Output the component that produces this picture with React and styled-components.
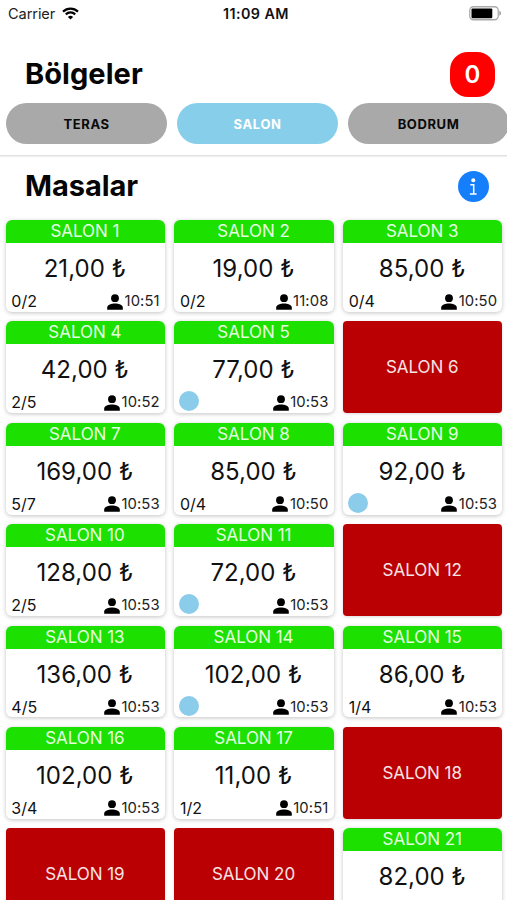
import React from "react";
import styled, { createGlobalStyle } from "styled-components";

const GlobalStyle = createGlobalStyle`
  * { box-sizing: border-box; }
  body { margin: 0; background: #fff; overflow: hidden; }
`;

const Screen = styled.div`
  width: 507px;
  height: 900px;
  overflow: hidden;
  background: #fff;
  color: #111;
  font-family: Inter, "Liberation Sans", sans-serif;
  white-space: nowrap;
`;

const StatusBar = styled.header`
  display: grid;
  grid-template-columns: 1fr auto 1fr;
  align-items: center;
  height: 28px;
  padding: 0 6px 0 8px;
`;

const Carrier = styled.div`
  display: flex;
  align-items: center;
  gap: 7px;
  font-size: 14.6px;
  letter-spacing: -0.1px;
  color: #222;
  svg { margin-bottom: 2px; }
`;

const Clock = styled.div`
  font-size: 14.3px;
  font-weight: 600;
  letter-spacing: 0.45px;
  padding: 0 0 1px 3px;
`;

const Power = styled.div`
  display: flex;
  justify-content: flex-end;
  padding-bottom: 2px;
`;

const TitleRow = styled.div`
  display: flex;
  align-items: center;
  justify-content: space-between;
  height: ${(p) => p.$height}px;
  padding: 0 ${(p) => p.$right}px 0 25px;
`;

const Title = styled.h1`
  margin: 0;
  color: #050505;
  font-size: 29px;
  line-height: 36px;
  font-weight: 700;
  letter-spacing: ${(p) => p.$tracking}px;
`;

const Regions = styled.section`
  height: 128px;
  padding-top: 23px;
  border-bottom: 1px solid #e2e2e2;
  box-shadow: 0 1px 1px rgba(0, 0, 0, 0.06);
`;

const CountBadge = styled.div`
  display: flex;
  align-items: center;
  justify-content: center;
  width: 45px;
  height: 45px;
  border-radius: 18px;
  background: #fe0000;
  color: #fff;
  font-size: 24px;
  font-weight: 600;
`;

const RegionList = styled.nav`
  display: flex;
  gap: 9.5px;
  padding: 6px 0 0 5.8px;
`;

const RegionButton = styled.button`
  flex: none;
  width: 161.5px;
  height: 41px;
  padding: 0;
  border: 0;
  border-radius: 21px;
  background: ${(p) => (p.$active ? "#87ceeb" : "#a9a9a9")};
  color: ${(p) => (p.$active ? "#fff" : "#0a0a0a")};
  font: 700 13px Inter, sans-serif;
  letter-spacing: 0.6px;
`;

const Info = styled.div`
  width: 31px;
  height: 31px;
  border-radius: 50%;
  background: #157efb;
  svg { display: block; }
`;

const TableGrid = styled.main`
  display: grid;
  grid-template-columns: repeat(3, 159.1px);
  grid-auto-rows: 91.8px;
  gap: 9.6px;
  padding: 4px 0 0 5.8px;
`;

const Card = styled.article`
  display: flex;
  flex-direction: column;
  border-radius: 6px;
  background: #fff;
  box-shadow: 0 1px 4px rgba(0, 0, 0, 0.24);
`;

const CardName = styled.div`
  height: 23px;
  line-height: 22px;
  padding-right: 1px;
  border-radius: 6px 6px 0 0;
  background: #1be000;
  color: #e4ffe0;
  text-align: center;
  font-size: 17px;
  letter-spacing: -0.05px;
`;

const Price = styled.div`
  height: 49px;
  line-height: 51px;
  padding-right: 1px;
  text-align: center;
  font-size: 24px;
  letter-spacing: 0.05px;
`;

const CardFooter = styled.div`
  display: flex;
  align-items: center;
  justify-content: space-between;
  height: 18px;
  padding: 0 5.2px 0 5.5px;
`;

const Seats = styled.span`
  font-size: 16px;
  line-height: 18px;
`;

const Dot = styled.span`
  width: 20px;
  height: 20px;
  margin: -2px 0 0 -1px;
  border-radius: 50%;
  background: #8accea;
`;

const Opened = styled.span`
  display: flex;
  align-items: center;
  gap: 1.5px;
  font-size: 14.8px;
  line-height: 18px;
  letter-spacing: 0.1px;
  color: #222;
  svg { margin-top: 1px; }
`;

const EmptyCard = styled.article`
  display: flex;
  align-items: center;
  justify-content: center;
  padding-right: 1px;
  border-radius: 4px;
  background: #bb0003;
  color: #f6e4e4;
  font-size: 17px;
  letter-spacing: -0.05px;
  box-shadow: 0 1px 3px rgba(0, 0, 0, 0.15);
`;

const WifiIcon = () => (
  <svg width="17" height="13" viewBox="0 0 17 13" fill="none" stroke="#000" strokeWidth="2.2">
    <path d="M1 4.6a10.7 10.7 0 0 1 15 0" />
    <path d="M3.8 7.4a6.7 6.7 0 0 1 9.4 0" />
    <path d="M8.5 12.6 5.9 9.9a3.8 3.8 0 0 1 5.2 0Z" fill="#000" stroke="none" />
  </svg>
);

const BatteryIcon = () => (
  <svg width="32" height="15" viewBox="0 0 32 15">
    <rect x="0.75" y="0.75" width="28.5" height="13" rx="3.7" fill="#fff" stroke="#aaa" strokeWidth="1.3" />
    <rect x="2.5" y="2.4" width="20.8" height="9.8" rx="1.2" fill="#000" />
    <path d="M30.4 4.8c2.1.5 2.1 4.4 0 4.9Z" fill="#999" />
  </svg>
);

const InfoIcon = () => (
  <svg width="31" height="31" viewBox="0 0 31 31">
    <circle cx="15.3" cy="9.3" r="2" fill="#fff" />
    <path d="M12.3 13.7h3.4v9.2M11.9 22.9h6.7" fill="none" stroke="#fff" strokeWidth="1.5" />
  </svg>
);

const PersonIcon = () => (
  <svg width="16" height="16" viewBox="0 0 16 16" fill="#000">
    <circle cx="8" cy="4.2" r="3.9" />
    <path d="M.2 15.7v-2.3c0-2.5 4.4-3.9 7.8-3.9s7.8 1.4 7.8 3.9v2.3Z" />
  </svg>
);

const regions = ["TERAS", "SALON", "BODRUM"];

const tables = [
  ["21,00", "0/2", "10:51"],
  ["19,00", "0/2", "11:08"],
  ["85,00", "0/4", "10:50"],
  ["42,00", "2/5", "10:52"],
  ["77,00", null, "10:53"],
  null,
  ["169,00", "5/7", "10:53"],
  ["85,00", "0/4", "10:50"],
  ["92,00", null, "10:53"],
  ["128,00", "2/5", "10:53"],
  ["72,00", null, "10:53"],
  null,
  ["136,00", "4/5", "10:53"],
  ["102,00", null, "10:53"],
  ["86,00", "1/4", "10:53"],
  ["102,00", "3/4", "10:53"],
  ["11,00", "1/2", "10:51"],
  null,
  null,
  null,
  ["82,00"],
];

function Table({ number, data }) {
  if (!data) return <EmptyCard>SALON {number}</EmptyCard>;
  const [price, seats, time] = data;
  return (
    <Card>
      <CardName>SALON {number}</CardName>
      <Price>{price} ₺</Price>
      {time && (
        <CardFooter>
          {seats ? <Seats>{seats}</Seats> : <Dot />}
          <Opened>
            <PersonIcon />
            {time}
          </Opened>
        </CardFooter>
      )}
    </Card>
  );
}

export default function App() {
  return (
    <Screen>
      <GlobalStyle />
      <StatusBar>
        <Carrier>
          Carrier <WifiIcon />
        </Carrier>
        <Clock>11:09 AM</Clock>
        <Power>
          <BatteryIcon />
        </Power>
      </StatusBar>
      <Regions>
        <TitleRow $height={46} $right={12}>
          <Title $tracking={0.05}>Bölgeler</Title>
          <CountBadge>0</CountBadge>
        </TitleRow>
        <RegionList>
          {regions.map((name) => (
            <RegionButton key={name} $active={name === "SALON"}>
              {name}
            </RegionButton>
          ))}
        </RegionList>
      </Regions>
      <TitleRow $height={60} $right={18}>
        <Title $tracking={-0.05}>Masalar</Title>
        <Info>
          <InfoIcon />
        </Info>
      </TitleRow>
      <TableGrid>
        {tables.map((data, i) => (
          <Table key={i} number={i + 1} data={data} />
        ))}
      </TableGrid>
    </Screen>
  );
}
